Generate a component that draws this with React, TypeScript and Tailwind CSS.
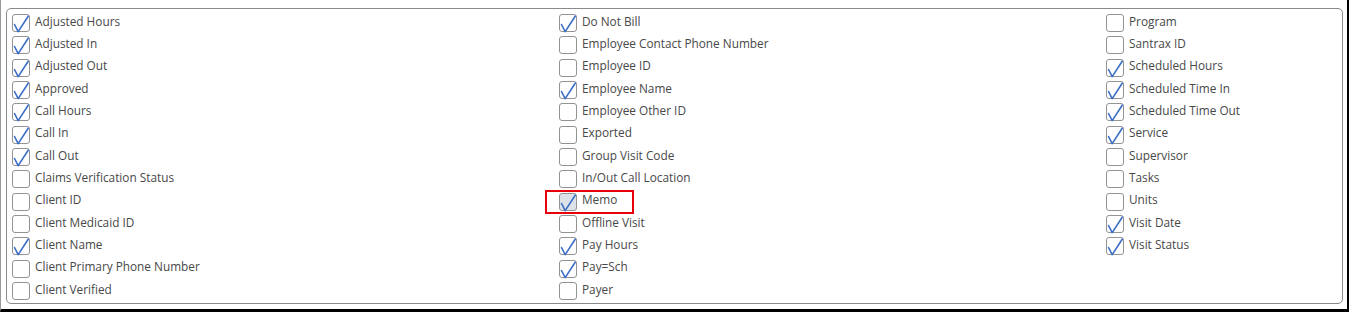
import React from "react";

type Field = { label: string; checked?: boolean; highlight?: boolean };

const columns: Field[][] = [
  [
    { label: "Adjusted Hours", checked: true },
    { label: "Adjusted In", checked: true },
    { label: "Adjusted Out", checked: true },
    { label: "Approved", checked: true },
    { label: "Call Hours", checked: true },
    { label: "Call In", checked: true },
    { label: "Call Out", checked: true },
    { label: "Claims Verification Status" },
    { label: "Client ID" },
    { label: "Client Medicaid ID" },
    { label: "Client Name", checked: true },
    { label: "Client Primary Phone Number" },
    { label: "Client Verified" },
  ],
  [
    { label: "Do Not Bill", checked: true },
    { label: "Employee Contact Phone Number" },
    { label: "Employee ID" },
    { label: "Employee Name", checked: true },
    { label: "Employee Other ID" },
    { label: "Exported" },
    { label: "Group Visit Code" },
    { label: "In/Out Call Location" },
    { label: "Memo", checked: true, highlight: true },
    { label: "Offline Visit" },
    { label: "Pay Hours", checked: true },
    { label: "Pay=Sch", checked: true },
    { label: "Payer" },
  ],
  [
    { label: "Program" },
    { label: "Santrax ID" },
    { label: "Scheduled Hours", checked: true },
    { label: "Scheduled Time In", checked: true },
    { label: "Scheduled Time Out", checked: true },
    { label: "Service", checked: true },
    { label: "Supervisor" },
    { label: "Tasks" },
    { label: "Units" },
    { label: "Visit Date", checked: true },
    { label: "Visit Status", checked: true },
  ],
];

const Checkbox = ({ checked, disabled }: { checked?: boolean; disabled?: boolean }) => (
  <span
    className={`relative block w-[18px] h-[18px] shrink-0 rounded-[3px] border border-[#939393] ${
      disabled ? "bg-[#dde2e8]" : "bg-white"
    }`}
  >
    {checked && (
      <svg
        className="absolute -left-px -top-px overflow-visible"
        width="18"
        height="18"
        viewBox="0 0 18 18"
      >
        <path
          d="M2.5 10.5 L6.2 17.6 L16.2 2.2"
          fill="none"
          stroke="#3a6ec6"
          strokeWidth="1.6"
          strokeLinecap="round"
          strokeLinejoin="round"
        />
      </svg>
    )}
  </span>
);

const Row = ({ field }: { field: Field }) => (
  <div className="relative flex items-center h-[22.33px]">
    <Checkbox checked={field.checked} disabled={field.highlight} />
    <span className="ml-[5px] text-[11.8px] leading-none text-[#484848] whitespace-nowrap -mt-[3px]">
      {field.label}
    </span>
    {field.highlight && (
      <span className="absolute -left-[14px] -top-[1px] w-[89px] h-[24px] border-2 border-[#e8000b]" />
    )}
  </div>
);

export default function App() {
  return (
    <div
      className="w-[1349px] h-[312px] bg-white border-l border-l-[#9a9a9a] border-r-2 border-r-black border-b-[3px] border-b-black overflow-hidden"
      style={{ fontFamily: '"Open Sans", "Liberation Sans", sans-serif' }}
    >
      <div className="ml-[5px] mt-[8px] w-[1337px] h-[296px] rounded-[5px] border border-[#8a8a8a] pl-[5px] pt-[3px]">
        <div className="grid grid-cols-[547px_547px_1fr]">
          {columns.map((col, i) => (
            <div key={i} className="flex flex-col">
              {col.map((f) => (
                <Row key={f.label} field={f} />
              ))}
            </div>
          ))}
        </div>
      </div>
    </div>
  );
}
